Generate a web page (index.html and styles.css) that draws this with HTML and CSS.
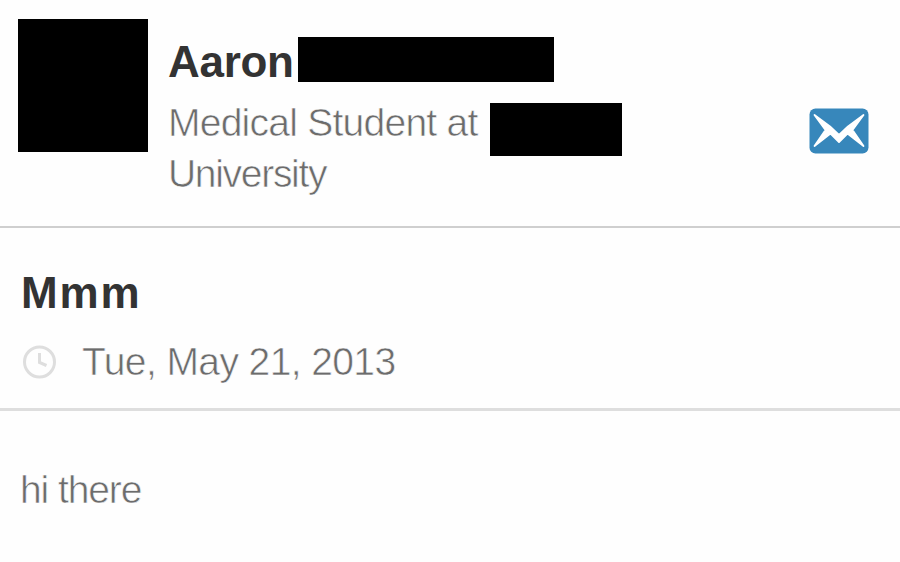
FILE: index.html
```
<!DOCTYPE html>
<html lang="en">

<head>
  <meta charset="UTF-8">
  <meta name="viewport" content="width=device-width, initial-scale=1.0">
  <title>Message</title>
  <link rel="stylesheet" href="styles.css">
</head>

<body>
  <header class="sender">
    <div class="avatar"></div>
    <div class="sender-info">
      <div class="name-row">
        <h1 class="name">Aaron</h1>
        <span class="hidden-name"></span>
      </div>
      <div class="job-row">
        <span class="light job">Medical Student at</span>
        <span class="hidden-school"></span>
      </div>
      <div class="light school">University</div>
    </div>
    <svg class="mail-icon" viewBox="0 0 60 46">
      <rect x="0.5" y="0.5" width="59" height="45" rx="6" fill="#3787bb" />
      <path d="M5.500 7 L21 18.500 L30 27 L39 18.500 L54.500 7 L43.500 22 L54.500 38 L38.500 25.500 L30 34 L21.500 25.500 L5.500 38 L16.500 22 Z" fill="#fff" stroke="#fff" stroke-width="1.8" stroke-linejoin="round" />
    </svg>
  </header>

  <section class="subject">
    <h2 class="title">Mmm</h2>
    <div class="date-row">
      <svg class="clock-icon" viewBox="0 0 34 34">
        <circle cx="17.500" cy="17" r="15" />
        <path d="M17.500 8 V17.500 L24.500 20.500" />
      </svg>
      <span class="light date">Tue, May 21, 2013</span>
    </div>
  </section>

  <p class="light message">hi there</p>
</body>

</html>
```

FILE: styles.css
```
* {
  box-sizing: border-box;
}

body {
  margin: 0;
  background-color: #fefefe;
  color: #333;
  font-family: "Liberation Sans", Arial, sans-serif;
}

h1, h2, p {
  margin: 0;
}

/* the outline trims the regular weight down to a light one */
.light {
  color: #6c6c6c;
  font-size: 39px;
  line-height: 50px;
  white-space: nowrap;
  -webkit-text-stroke: 0.6px #fefefe;
}

.sender {
  display: flex;
  height: 228px;
  padding: 19px 31px 0 18px;
  border-bottom: 2px solid #cfcfcf;
}

.avatar {
  width: 130px;
  height: 133px;
  background-color: #000;
}

.sender-info {
  flex: 1;
  padding: 18px 0 0 20px;
}

.name-row {
  display: flex;
  height: 45px;
}

.name {
  width: 130px;
  font-size: 44px;
  line-height: 49px;
  letter-spacing: -0.3px;
}

.hidden-name {
  width: 256px;
  height: 45px;
  background-color: #000;
}

.job-row {
  display: flex;
  height: 53px;
  margin-top: 21px;
}

.job {
  width: 322px;
  line-height: 39px;
  letter-spacing: -0.75px;
}

.hidden-school {
  width: 132px;
  height: 53px;
  background-color: #000;
}

.school {
  line-height: 35px;
  letter-spacing: -1.3px;
}

.mail-icon {
  width: 60px;
  height: 46px;
  margin-top: 89px;
}

.subject {
  height: 183px;
  padding: 40px 22px 0;
  border-bottom: 3px solid #dedede;
}

.title {
  margin-left: -1px;
  font-size: 44px;
  line-height: 50px;
  letter-spacing: 1.8px;
}

.date-row {
  display: flex;
  align-items: center;
  margin-top: 19px;
}

.clock-icon {
  width: 34px;
  height: 34px;
  margin-right: 26px;
  fill: none;
  stroke: #dedede;
  stroke-width: 3;
}

.date {
  letter-spacing: -0.6px;
}

.message {
  padding: 54px 0 0 20px;
  letter-spacing: -1.1px;
}
```
